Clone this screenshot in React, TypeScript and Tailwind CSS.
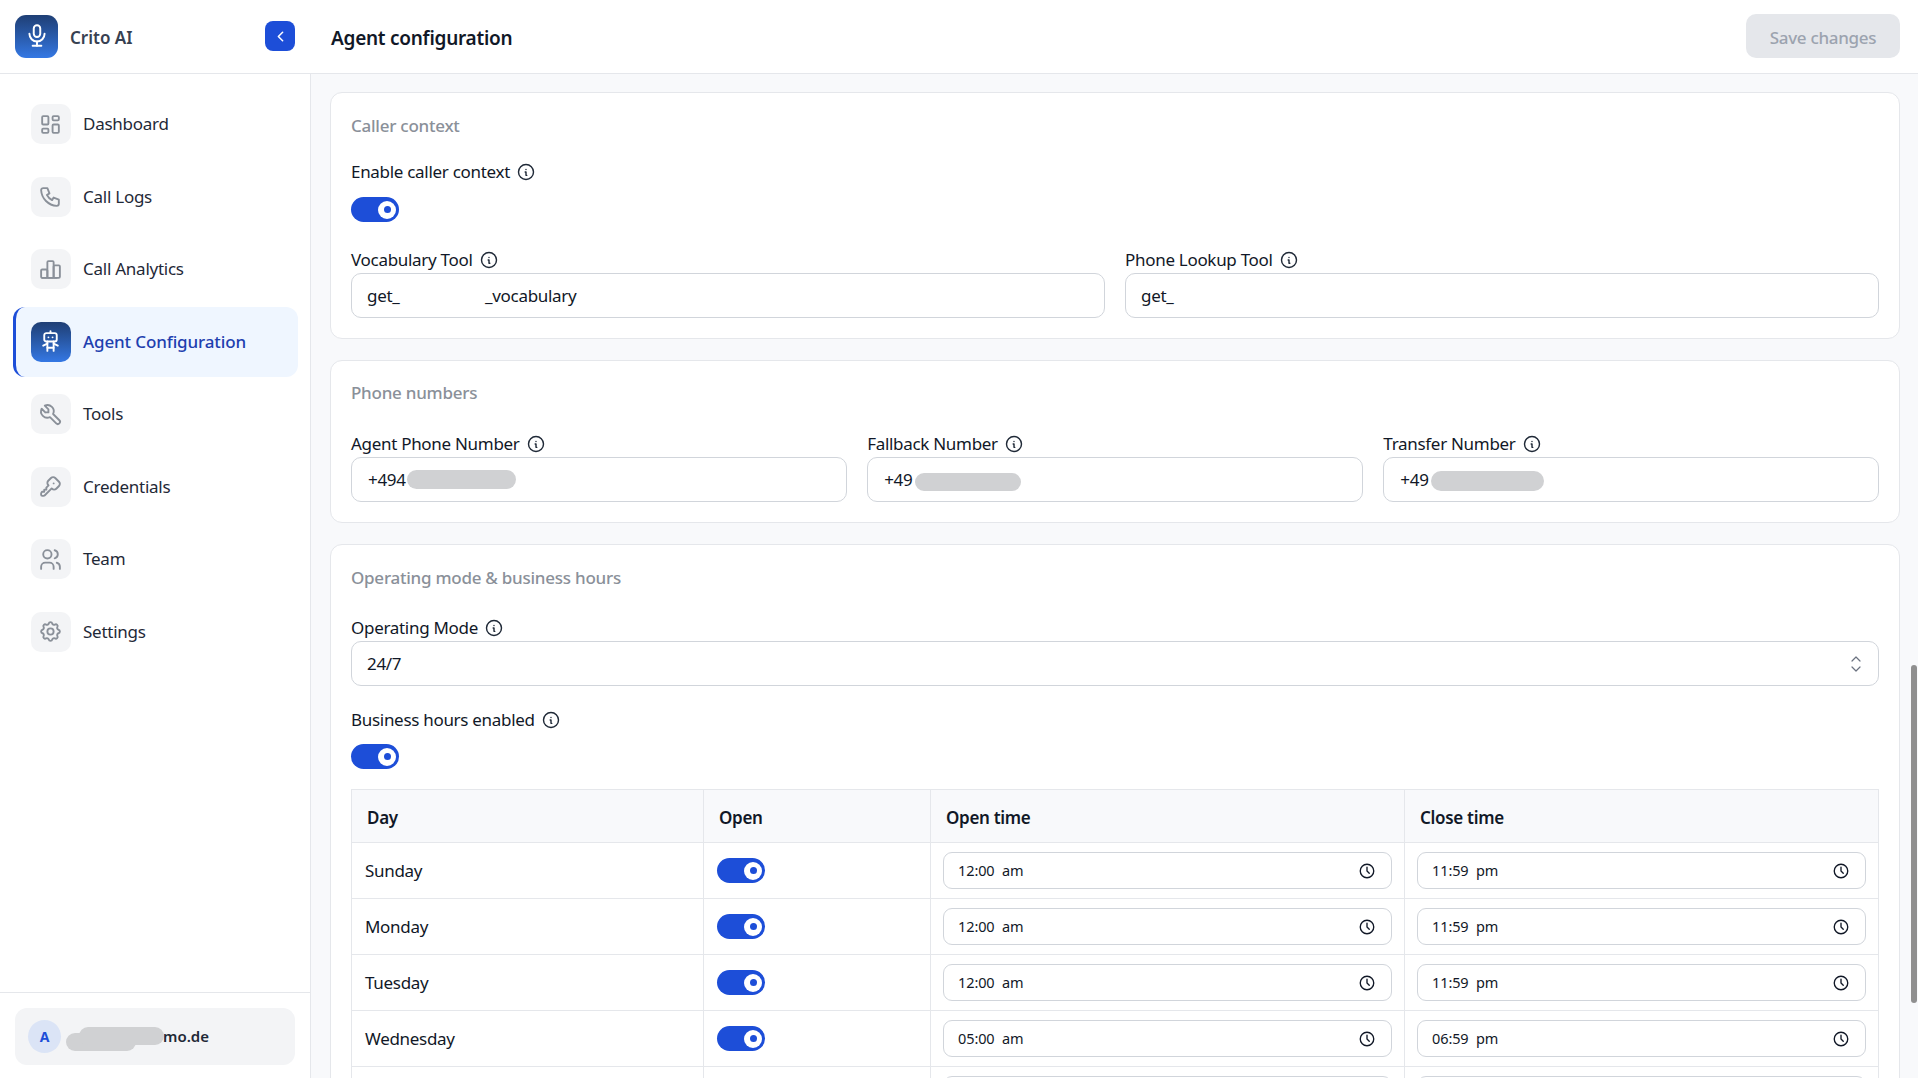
import React from "react";
import {
  TbMicrophone, TbChevronLeft, TbLayoutDashboard, TbPhone, TbChartBar, TbRobot, TbTool, TbKey,
  TbUsers, TbSettings, TbInfoCircle, TbClock, TbSelector,
} from "react-icons/tb";

const nav = [
  { label: "Dashboard", Icon: TbLayoutDashboard },
  { label: "Call Logs", Icon: TbPhone },
  { label: "Call Analytics", Icon: TbChartBar },
  { label: "Agent Configuration", Icon: TbRobot, active: true },
  { label: "Tools", Icon: TbTool },
  { label: "Credentials", Icon: TbKey },
  { label: "Team", Icon: TbUsers },
  { label: "Settings", Icon: TbSettings },
];

const rows = [
  ["Sunday", "12:00 am", "11:59 pm"],
  ["Monday", "12:00 am", "11:59 pm"],
  ["Tuesday", "12:00 am", "11:59 pm"],
  ["Wednesday", "05:00 am", "06:59 pm"],
  ["", "", ""],
];

function Toggle() {
  return (
    <div className="flex h-[25px] w-[48px] items-center justify-end rounded-full bg-[#1d4ed8] pr-[3px]">
      <div className="flex h-[18px] w-[18px] items-center justify-center rounded-full bg-white">
        <div className="h-[7px] w-[7px] rounded-full bg-[#1d4ed8]" />
      </div>
    </div>
  );
}

function Label({ text }: { text: string }) {
  return (
    <div className="flex h-[24px] items-center gap-[6px] text-[17px] leading-[24px] tracking-[-0.3px] text-[#111827]">
      <span>{text}</span>
      <TbInfoCircle className="h-[20px] w-[20px] text-[#1f2937]" strokeWidth={1.7} />
    </div>
  );
}

function Field({ children }: { children: React.ReactNode }) {
  return (
    <div className="relative mt-[1px] flex h-[45px] items-center rounded-[10px] border border-[#d1d5db] bg-white pl-[15px] pt-[1px] text-[17px] tracking-[-0.3px] text-[#111827]">
      {children}
    </div>
  );
}

function Blob({ className }: { className: string }) {
  return <div className={`absolute rounded-full bg-[#d0d1d3] ${className}`} />;
}

function SectionTitle({ text }: { text: string }) {
  return <div className="h-[24px] text-[17px] font-medium leading-[24px] tracking-[-0.25px] text-[#8a9099]">{text}</div>;
}

function TimeBox({ value }: { value: string }) {
  return (
    <div className="flex h-[37px] items-center justify-between rounded-[9px] border border-[#d1d5db] bg-white pl-[14px] pr-[15px] text-[14.5px] tracking-[-0.1px] text-[#111827]">
      <span className="whitespace-pre">{value.replace(" ", "  ")}</span>
      <TbClock className="h-[18px] w-[18px] text-[#111827]" strokeWidth={1.8} />
    </div>
  );
}

export default function App() {
  return (
    <div className="flex h-screen flex-col overflow-hidden bg-white font-['Noto_Sans','Open_Sans',sans-serif] text-[#111827]">
      <header className="flex h-[74px] shrink-0 items-center border-b border-[#e5e7eb] bg-white pb-[1px]">
        <div className="flex w-[311px] shrink-0 items-center pl-[15px] pr-[16px]">
          <div className="flex h-[43px] w-[43px] items-center justify-center rounded-[11px] bg-gradient-to-b from-[#1f3f75] to-[#3478e4]">
            <TbMicrophone className="h-[26px] w-[26px] text-white" strokeWidth={1.8} />
          </div>
          <span className="ml-[12px] pt-[3px] text-[17px] font-semibold text-[#374151]">Crito AI</span>
          <button className="ml-auto flex h-[30px] w-[30px] items-center justify-center rounded-[8px] bg-[#1d4ed8] text-white">
            <TbChevronLeft className="h-[17px] w-[17px]" strokeWidth={2.2} />
          </button>
        </div>
        <h1 className="ml-[20px] pt-[4px] text-[19px] font-semibold tracking-[-0.26px] text-[#111827]">Agent configuration</h1>
        <button className="ml-auto mr-[18px] h-[44px] w-[154px] rounded-[10px] bg-[#e5e7eb] pt-[3px] text-[17px] font-medium tracking-[-0.3px] text-[#9ca3af]">
          Save changes
        </button>
      </header>

      <div className="flex min-h-0 flex-1">
        <aside className="flex w-[311px] shrink-0 flex-col border-r border-[#e5e7eb] bg-white">
          <nav className="flex flex-1 flex-col gap-[2.5px] pl-[13px] pr-[12px] pt-[15px]">
            {nav.map(({ label, Icon, active }) => (
              <div
                key={label}
                className={
                  active
                    ? "flex h-[70px] items-center gap-[12px] rounded-[12px] border-l-[3px] border-[#1d4ed8] bg-[#eff6ff] pl-[15px]"
                    : "flex h-[70px] items-center gap-[12px] border-l-[3px] border-transparent pl-[15px]"
                }
              >
                <div
                  className={
                    active
                      ? "flex h-[40px] w-[40px] items-center justify-center rounded-[10px] bg-gradient-to-b from-[#1f3f75] to-[#3478e4] pr-[2px]"
                      : "flex h-[40px] w-[40px] items-center justify-center rounded-[10px] bg-[#f3f4f6] pr-[2px]"
                  }
                >
                  <Icon className={active ? "h-[25px] w-[25px] text-white" : "h-[25px] w-[25px] text-[#8a9099]"} strokeWidth={1.8} />
                </div>
                <span className={active ? "text-[17px] font-medium tracking-[-0.13px] text-[#1e40af]" : "text-[17px] tracking-[-0.25px] text-[#1f2937]"}>{label}</span>
              </div>
            ))}
          </nav>
          <div className="border-t border-[#e5e7eb] px-[15px] pt-[15px] pb-[13px]">
            <div className="relative flex h-[57px] items-center rounded-[12px] bg-[#f3f4f6] pl-[13px]">
              <div className="flex h-[33px] w-[33px] items-center justify-center rounded-full bg-[#dbe4f6] text-[14px] font-bold text-[#1d4ed8]">A</div>
              <span className="ml-[102px] text-[15px] font-semibold text-[#1f2937]">mo.de</span>
              <Blob className="left-[51px] top-[25px] h-[18px] w-[70px]" />
              <Blob className="left-[64px] top-[19px] h-[18px] w-[85px]" />
            </div>
          </div>
        </aside>

        <main className="relative flex min-w-0 flex-1 flex-col gap-[21px] overflow-hidden bg-[#f8f9fb] pl-[19px] pr-[18px] pt-[18px]">
          <section className="shrink-0 rounded-[12px] border border-[#e5e7eb] bg-white pb-[20px] pl-[20px] pr-[20px] pt-[21px]">
            <SectionTitle text="Caller context" />
            <div className="mt-[22px]"><Label text="Enable caller context" /></div>
            <div className="mt-[13px]"><Toggle /></div>
            <div className="mt-[26px] grid grid-cols-2 gap-[20px]">
              <div>
                <Label text="Vocabulary Tool" />
                <Field><span className="w-[118px]">get_</span><span>_vocabulary</span></Field>
              </div>
              <div>
                <Label text="Phone Lookup Tool" />
                <Field>get_</Field>
              </div>
            </div>
          </section>

          <section className="shrink-0 rounded-[12px] border border-[#e5e7eb] bg-white pb-[20px] pl-[20px] pr-[20px] pt-[20px]">
            <SectionTitle text="Phone numbers" />
            <div className="mt-[27px] grid grid-cols-3 gap-[20.5px]">
              <div>
                <Label text="Agent Phone Number" />
                <Field><span className="pl-[1px]">+494</span><Blob className="left-[55px] top-[12px] h-[19px] w-[109px]" /></Field>
              </div>
              <div>
                <Label text="Fallback Number" />
                <Field><span className="pl-[1px]">+49</span><Blob className="left-[47px] top-[15px] h-[18px] w-[106px]" /></Field>
              </div>
              <div>
                <Label text="Transfer Number" />
                <Field><span className="pl-[1px]">+49</span><Blob className="left-[47px] top-[13px] h-[20px] w-[113px]" /></Field>
              </div>
            </div>
          </section>

          <section className="shrink-0 rounded-[12px] border border-[#e5e7eb] bg-white pl-[20px] pr-[20px] pt-[21px]">
            <SectionTitle text="Operating mode & business hours" />
            <div className="mt-[26px]"><Label text="Operating Mode" /></div>
            <Field>
              <span>24/7</span>
              <TbSelector className="absolute right-[10px] top-[10px] h-[24px] w-[24px] text-[#6b7280]" strokeWidth={1.2} />
            </Field>
            <div className="mt-[22px]"><Label text="Business hours enabled" /></div>
            <div className="mt-[12px]"><Toggle /></div>
            <table className="mt-[20px] w-[1527px] table-fixed border-collapse text-[17px] tracking-[-0.3px]">
              <colgroup>
                <col className="w-[352px]" />
                <col className="w-[227px]" />
                <col className="w-[474px]" />
                <col className="w-[474px]" />
              </colgroup>
              <thead>
                <tr className="h-[53px] bg-[#f8f9fb]">
                  {["Day", "Open", "Open time", "Close time"].map((h) => (
                    <th key={h} className="border border-[#e5e7eb] pl-[15px] pt-[3px] text-left font-semibold text-[#111827]">{h}</th>
                  ))}
                </tr>
              </thead>
              <tbody>
                {rows.map(([day, open, close], i) => (
                  <tr key={i} className="h-[56px]">
                    <td className="border border-[#e5e7eb] pl-[13px] text-[#111827]">{day}</td>
                    <td className="border border-[#e5e7eb] pl-[13px]"><Toggle /></td>
                    <td className="border border-[#e5e7eb] px-[12px]"><TimeBox value={open} /></td>
                    <td className="border border-[#e5e7eb] px-[12px]"><TimeBox value={close} /></td>
                  </tr>
                ))}
              </tbody>
            </table>
          </section>

          <div className="absolute right-[1px] top-[591px] h-[338px] w-[6px] rounded-full bg-[#8f8f8f]" />
        </main>
      </div>
    </div>
  );
}
